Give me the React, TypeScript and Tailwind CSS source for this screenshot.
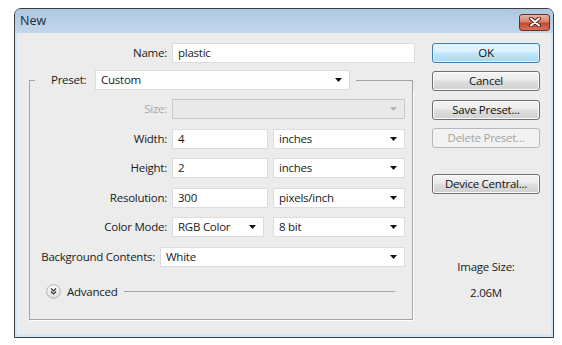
import React from 'react';

function Arrow({ disabled = false }: { disabled?: boolean }) {
  return (
    <svg width="7" height="4" viewBox="0 0 7 4" className="shrink-0">
      <path d="M0 0H7L3.5 4Z" fill={disabled ? '#b4b4b4' : '#111'} />
    </svg>
  );
}

function Field({ value, className = '' }: { value: string; className?: string }) {
  return (
    <div className={`flex h-[20px] items-center border border-[#dcdcdc] bg-white pl-[5px] ${className}`}>
      {value}
    </div>
  );
}

function Select({
  value,
  className = '',
  disabled = false,
}: {
  value: string;
  className?: string;
  disabled?: boolean;
}) {
  return (
    <div
      className={`flex h-[20px] items-center justify-between pl-[5px] pr-[7px] ${
        disabled ? 'border border-[#c9c9c9] bg-[#e9e9e9]' : 'border border-[#dcdcdc] bg-white'
      } ${className}`}
    >
      <span>{value}</span>
      <Arrow disabled={disabled} />
    </div>
  );
}

function Button({
  label,
  className = '',
  variant = 'normal',
}: {
  label: string;
  className?: string;
  variant?: 'normal' | 'default' | 'disabled';
}) {
  const look =
    variant === 'default'
      ? 'border-[#3c7fb1] bg-[linear-gradient(to_bottom,#eaf6fd_0%,#d9f0fc_45%,#bee6fd_50%,#a7d9f5_100%)] shadow-[inset_0_0_0_1px_#dff3fd] text-[#111]'
      : variant === 'disabled'
        ? 'border-[#b5b9bc] bg-[#f2f2f2] text-[#a3a3a3]'
        : 'border-[#707070] bg-[linear-gradient(to_bottom,#f4f4f4_0%,#ececec_45%,#dfdfdf_50%,#d0d0d0_100%)] shadow-[inset_0_0_0_1px_#fbfbfb] text-[#111]';
  return (
    <div className={`flex h-[20px] items-center justify-center rounded-[3px] border ${look} ${className}`}>
      {label}
    </div>
  );
}

export default function App() {
  return (
    <div className="min-h-screen bg-white pl-[14px] pt-[8px] font-['Open_Sans','Noto_Sans',sans-serif] text-[11.5px] tracking-[-0.25px] text-[#1a1a1a]">
      <div className="flex h-[330px] w-[540px] flex-col overflow-hidden rounded-t-[7px] border border-[#3d3d3d] bg-[#d2e6f4]">
        {/* title bar */}
        <div className="flex h-[24px] shrink-0 items-center justify-between bg-[linear-gradient(to_bottom,#aec8e3,#c2d7ec)] pl-[5px] pr-[3px]">
          <span className="text-[12.5px] tracking-normal text-[#1e2a36]">New</span>
          <div className="mt-[2px] flex h-[17px] w-[31px] items-center justify-center rounded-[3px] border border-[#6e2b1e] bg-[linear-gradient(to_bottom,#e9b3a2_0%,#d9826b_45%,#c24a2f_55%,#d4735a_100%)]">
            <svg width="12" height="10" viewBox="0 0 12 10">
              <path d="M2 1.5L10 8.5M10 1.5L2 8.5" stroke="#5b1f12" strokeWidth="4" strokeLinecap="round" />
              <path d="M2 1.5L10 8.5M10 1.5L2 8.5" stroke="#fff" strokeWidth="2" strokeLinecap="round" />
            </svg>
          </div>
        </div>

        {/* body */}
        <div className="mx-[2px] mb-[3px] flex flex-1 bg-[#ececec]">
          {/* left side */}
          <div className="flex w-[403px] flex-col pt-[10px]">
            <div className="flex items-center">
              <span className="w-[150px] text-right">Name:</span>
              <Field value="plastic" className="ml-[5px] w-[243px]" />
            </div>

            {/* preset group */}
            <div className="ml-[12px] mt-[7px] w-[384px]">
              <div className="flex h-[20px] items-center">
                <div className="h-[10px] w-[6px] self-end border-l border-t border-[#a4a4a4]" />
                <span className="ml-[16px] w-[44px]">Preset:</span>
                <Select value="Custom" className="w-[255px]" />
                <div className="ml-[6px] h-[10px] flex-1 self-end border-r border-t border-[#a4a4a4]" />
              </div>
              <div className="h-[230px] border-b border-l border-r border-[#a4a4a4] pt-[9px] shadow-[1px_1px_0_#fff]">
                <div className="flex flex-col gap-[9.5px]">
                  <div className="flex items-center">
                    <span className="w-[137px] text-right text-[#a8a8a8]">Size:</span>
                    <Select value="" disabled className="ml-[5px] w-[233px]" />
                  </div>
                  <div className="flex items-center">
                    <span className="w-[137px] text-right">Width:</span>
                    <Field value="4" className="ml-[5px] w-[96px]" />
                    <Select value="inches" className="ml-[5px] w-[132px]" />
                  </div>
                  <div className="flex items-center">
                    <span className="w-[137px] text-right">Height:</span>
                    <Field value="2" className="ml-[5px] w-[96px]" />
                    <Select value="inches" className="ml-[5px] w-[132px]" />
                  </div>
                  <div className="flex items-center">
                    <span className="w-[137px] text-right">Resolution:</span>
                    <Field value="300" className="ml-[5px] w-[96px]" />
                    <Select value="pixels/inch" className="ml-[5px] w-[132px]" />
                  </div>
                  <div className="flex items-center">
                    <span className="w-[137px] text-right">Color Mode:</span>
                    <Select value="RGB Color" className="ml-[5px] w-[92px]" />
                    <Select value="8 bit" className="ml-[9px] w-[132px]" />
                  </div>
                  <div className="flex items-center">
                    <span className="w-[125px] text-right">Background Contents:</span>
                    <Select value="White" className="ml-[5px] w-[245px]" />
                  </div>
                </div>
                <div className="mt-[17px] flex h-[16px] items-center pl-[16px] pr-[17px]">
                  <svg width="15" height="15" viewBox="0 0 15 15" className="shrink-0">
                    <defs>
                      <linearGradient id="adv" x1="0" y1="0" x2="0" y2="1">
                        <stop offset="0" stopColor="#ffffff" />
                        <stop offset="1" stopColor="#dcdcdc" />
                      </linearGradient>
                    </defs>
                    <circle cx="7.5" cy="7.5" r="6.8" fill="url(#adv)" stroke="#b0b0b0" />
                    <path d="M5 4.5L7.5 7L10 4.5M5 7.5L7.5 10L10 7.5" fill="none" stroke="#333" strokeWidth="1.2" />
                  </svg>
                  <span className="ml-[6px]">Advanced</span>
                  <div className="ml-[6px] h-0 flex-1 border-t border-[#a4a4a4]" />
                </div>
              </div>
            </div>
          </div>

          {/* right side */}
          <div className="ml-[12px] flex w-[108px] flex-col pt-[10px]">
            <Button label="OK" variant="default" />
            <Button label="Cancel" className="mt-[8px]" />
            <Button label="Save Preset..." className="mt-[9px]" />
            <Button label="Delete Preset..." variant="disabled" className="mt-[8px]" />
            <Button label="Device Central..." className="mt-[26px]" />
            <div className="mt-[65px] h-[16px] text-center leading-[16px]">Image Size:</div>
            <div className="mt-[10px] h-[16px] text-center leading-[16px]">2.06M</div>
          </div>
        </div>
      </div>
    </div>
  );
}
